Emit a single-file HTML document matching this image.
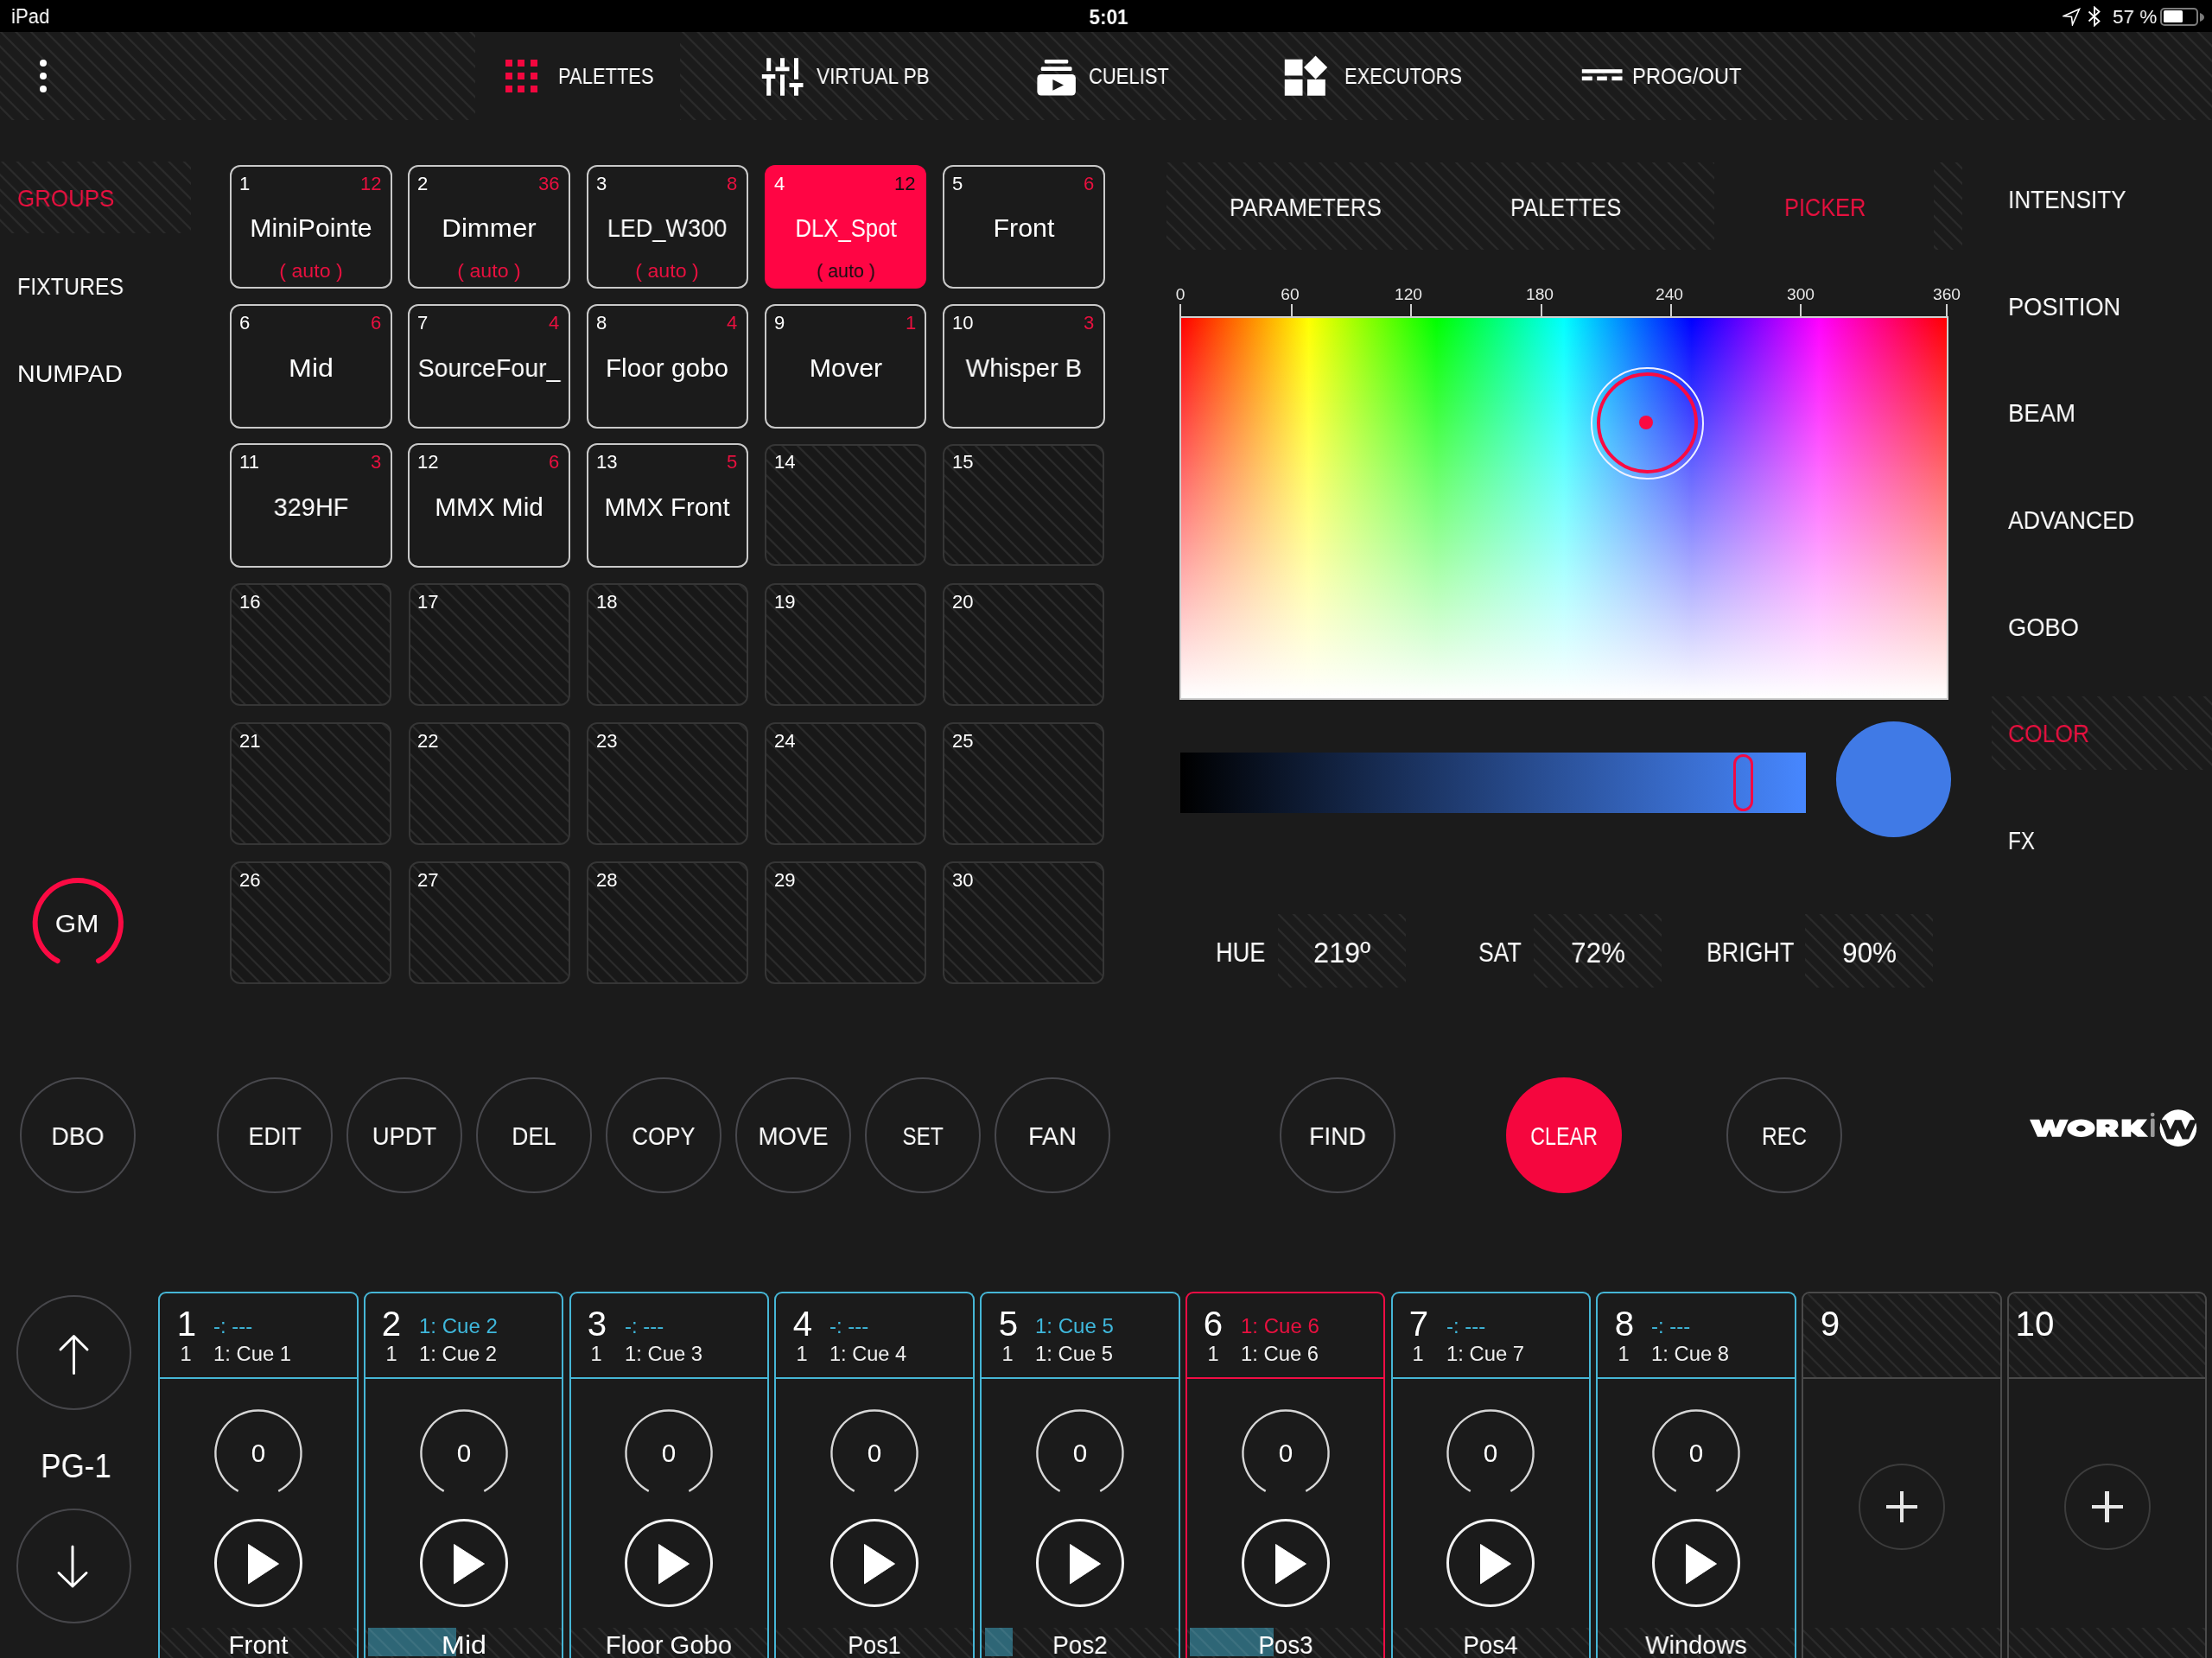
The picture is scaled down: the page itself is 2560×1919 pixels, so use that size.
<!DOCTYPE html>
<html><head><meta charset="utf-8"><title>Executors</title>
<style>
html,body{margin:0;padding:0;}
body{width:2560px;height:1919px;overflow:hidden;position:relative;background:#1b1b1b;font-family:"Liberation Sans",sans-serif;}
.t{position:absolute;line-height:1;white-space:nowrap;will-change:transform;}
</style></head><body>
<div style="position:absolute;left:0.0px;top:0.0px;width:2560.0px;height:37.0px;background:#000;"></div>
<div class="t" id="s_ipad" style="left:12.7px;top:8.2px;font-size:23.69px;color:#fff;transform:scaleX(0.9380);transform-origin:0 0;">iPad</div>
<div class="t" id="s_time" style="left:282.7px;width:2000px;text-align:center;top:8.5px;font-size:23.26px;color:#fff;font-weight:700;transform:scaleX(0.9697);transform-origin:50% 0;">5:01</div>
<div class="t" id="s_batt" style="left:2444.5px;top:7.7px;font-size:22.97px;color:#fff;transform:scaleX(0.9780);transform-origin:0 0;">57 %</div>
<div style="position:absolute;left:2500.0px;top:8.5px;width:44.0px;height:21.0px;border:2px solid #7a7a7a;border-radius:5px;box-sizing:border-box;"></div>
<div style="position:absolute;left:2503.8px;top:11.8px;width:22.4px;height:14.4px;background:#fff;border-radius:1.5px;"></div>
<svg style="position:absolute;left:2546px;top:15px" width="6" height="10"><path d="M0 0 Q5 2 5 5 Q5 8 0 10Z" fill="#7a7a7a"/></svg>
<svg style="position:absolute;left:2415px;top:7px" width="18" height="24" viewBox="0 0 18 24"><path d="M2.5 6.5 L14.5 17.5 L9 22.5 V1.5 L14.5 6.5 L2.5 17.5" fill="none" stroke="#fff" stroke-width="1.8"/></svg>
<svg style="position:absolute;left:2387px;top:9px" width="21" height="21" viewBox="0 0 21 21"><path d="M19.5 1.5 L1.5 9.5 L10.5 10.5 L11.5 19.5 Z" fill="none" stroke="#fff" stroke-width="1.6" stroke-linejoin="miter"/></svg>
<div style="position:absolute;left:0.0px;top:37.0px;width:2560.0px;height:101.5px;background-color:#1b1b1b;background-image:repeating-linear-gradient(45deg,rgba(43,43,43,0) 0px,rgba(43,43,43,0) 9.2px,#2b2b2b 10.2px,#2b2b2b 11.4px,rgba(43,43,43,0) 12.4px);"></div>
<div style="position:absolute;left:550.0px;top:37.0px;width:237.0px;height:101.5px;background:#1b1b1b;"></div>
<div style="position:absolute;left:46.2px;top:69.4px;width:8.0px;height:8.0px;background:#fff;border-radius:50%;"></div>
<div style="position:absolute;left:46.2px;top:83.9px;width:8.0px;height:8.0px;background:#fff;border-radius:50%;"></div>
<div style="position:absolute;left:46.2px;top:98.8px;width:8.0px;height:8.0px;background:#fff;border-radius:50%;"></div>
<div style="position:absolute;left:584.5px;top:68.9px;width:8.0px;height:8.0px;background:#f2073f;"></div>
<div style="position:absolute;left:584.5px;top:83.8px;width:8.0px;height:8.0px;background:#f2073f;"></div>
<div style="position:absolute;left:584.5px;top:98.7px;width:8.0px;height:8.0px;background:#f2073f;"></div>
<div style="position:absolute;left:599.4px;top:68.9px;width:8.0px;height:8.0px;background:#f2073f;"></div>
<div style="position:absolute;left:599.4px;top:83.8px;width:8.0px;height:8.0px;background:#f2073f;"></div>
<div style="position:absolute;left:599.4px;top:98.7px;width:8.0px;height:8.0px;background:#f2073f;"></div>
<div style="position:absolute;left:614.3px;top:68.9px;width:8.0px;height:8.0px;background:#f2073f;"></div>
<div style="position:absolute;left:614.3px;top:83.8px;width:8.0px;height:8.0px;background:#f2073f;"></div>
<div style="position:absolute;left:614.3px;top:98.7px;width:8.0px;height:8.0px;background:#f2073f;"></div>
<div class="t" id="tb_pal" style="left:646.2px;top:76.2px;font-size:25.00px;color:#fff;transform:scaleX(0.8783);transform-origin:0 0;">PALETTES</div>
<svg style="position:absolute;left:880px;top:66px" width="52" height="46" viewBox="880 66 52 46"><g fill="#fff"><rect x="887.2" y="67.2" width="5" height="15"/><rect x="881.8" y="86" width="15.5" height="5"/><rect x="887.2" y="91" width="5" height="19.7"/><rect x="903" y="67.2" width="5" height="10.5"/><rect x="897.5" y="77.5" width="16" height="4.8"/><rect x="903" y="86.4" width="5" height="24.3"/><rect x="919" y="67.2" width="5" height="24.6"/><rect x="913.5" y="96" width="16" height="5"/><rect x="919" y="101" width="5" height="9.7"/></g></svg>
<div class="t" id="tb_vpb" style="left:945.0px;top:76.2px;font-size:25.00px;color:#fff;transform:scaleX(0.9048);transform-origin:0 0;">VIRTUAL PB</div>
<svg style="position:absolute;left:1198px;top:66px" width="50" height="48" viewBox="1198 66 50 48"><rect x="1208.8" y="69.1" width="27.5" height="4.3" rx="1.5" fill="#fff"/><rect x="1204.7" y="77.2" width="35.9" height="4.8" rx="1.5" fill="#fff"/><rect x="1200.4" y="86" width="44.5" height="24.5" rx="4.5" fill="#fff"/><path d="M1218.4 92 L1231 98.4 L1218.4 104.8Z" fill="#1b1b1b"/></svg>
<div class="t" id="tb_cue" style="left:1259.5px;top:76.2px;font-size:25.00px;color:#fff;transform:scaleX(0.8797);transform-origin:0 0;">CUELIST</div>
<svg style="position:absolute;left:1484px;top:62px" width="54" height="52" viewBox="1484 62 54 52"><g fill="#fff"><rect x="1486.8" y="68.7" width="20.7" height="18.8"/><rect x="1486.8" y="91.9" width="20.7" height="18.8"/><rect x="1513" y="91.9" width="20.8" height="18.8"/><path d="M1522.6 64.5 L1536.2 78.1 L1522.6 91.7 L1509 78.1Z"/></g></svg>
<div class="t" id="tb_exe" style="left:1556.0px;top:76.2px;font-size:25.00px;color:#fff;transform:scaleX(0.8766);transform-origin:0 0;">EXECUTORS</div>
<svg style="position:absolute;left:1828px;top:78px" width="52" height="18" viewBox="1828 78 52 18"><g fill="#fff"><rect x="1830.8" y="80.2" width="46.7" height="4.5"/><rect x="1830.8" y="88.5" width="12" height="4.7"/><rect x="1848.2" y="88.5" width="11.6" height="4.7"/><rect x="1865.4" y="88.5" width="12.1" height="4.7"/></g></svg>
<div class="t" id="tb_prog" style="left:1889.4px;top:76.2px;font-size:25.00px;color:#fff;transform:scaleX(0.9487);transform-origin:0 0;">PROG/OUT</div>
<div style="position:absolute;left:0.0px;top:187.0px;width:221.0px;height:83.0px;background-color:#1b1b1b;background-image:repeating-linear-gradient(45deg,rgba(43,43,43,0) 0px,rgba(43,43,43,0) 9.2px,#2b2b2b 10.2px,#2b2b2b 11.4px,rgba(43,43,43,0) 12.4px);"></div>
<div class="t" id="ln_groups" style="left:19.7px;top:215.3px;font-size:28.49px;color:#e8103f;transform:scaleX(0.9096);transform-origin:0 0;">GROUPS</div>
<div class="t" id="ln_fix" style="left:19.7px;top:317.2px;font-size:28.49px;color:#fff;transform:scaleX(0.8743);transform-origin:0 0;">FIXTURES</div>
<div class="t" id="ln_num" style="left:19.7px;top:417.9px;font-size:28.49px;color:#fff;transform:scaleX(1.0039);transform-origin:0 0;">NUMPAD</div>
<svg style="position:absolute;left:0;top:0" width="200" height="1200" viewBox="0 0 200 1200"><path d="M66.63 1112.19 A49.6 49.6 0 1 1 113.97 1112.19" fill="none" stroke="#fb0a43" stroke-width="6" stroke-linecap="round"/></svg>
<div class="t" id="gm" style="left:-910.6px;width:2000px;text-align:center;top:1053.6px;font-size:30.23px;color:#fff;transform:scaleX(1.0403);transform-origin:50% 0;">GM</div>
<div style="position:absolute;left:266.0px;top:190.5px;width:187.7px;height:143.8px;border:2.6px solid #c9c9c9;border-radius:12px;box-sizing:border-box;"></div>
<div class="t" id="g1_n" style="left:277.2px;top:201.7px;font-size:22.09px;color:#fff;transform-origin:0 0;">1</div>
<div class="t" id="g1_c" style="right:2118.8px;text-align:right;top:201.7px;font-size:22.09px;color:#e8103f;transform-origin:100% 0;">12</div>
<div class="t" id="g1_name" style="left:-640.1px;width:2000px;text-align:center;top:249.3px;font-size:29.36px;color:#fff;transform:scaleX(1.0312);transform-origin:50% 0;">MiniPointe</div>
<div class="t" id="g1_auto" style="left:-640.1px;width:2000px;text-align:center;top:302.7px;font-size:22.53px;color:#e8103f;transform:scaleX(1.0292);transform-origin:50% 0;">( auto )</div>
<div style="position:absolute;left:472.2px;top:190.5px;width:187.7px;height:143.8px;border:2.6px solid #c9c9c9;border-radius:12px;box-sizing:border-box;"></div>
<div class="t" id="g2_n" style="left:483.4px;top:201.7px;font-size:22.09px;color:#fff;transform-origin:0 0;">2</div>
<div class="t" id="g2_c" style="right:1912.5px;text-align:right;top:201.7px;font-size:22.09px;color:#e8103f;transform-origin:100% 0;">36</div>
<div class="t" id="g2_name" style="left:-433.9px;width:2000px;text-align:center;top:249.3px;font-size:29.36px;color:#fff;transform:scaleX(1.0641);transform-origin:50% 0;">Dimmer</div>
<div class="t" id="g2_auto" style="left:-433.9px;width:2000px;text-align:center;top:302.7px;font-size:22.53px;color:#e8103f;transform:scaleX(1.0292);transform-origin:50% 0;">( auto )</div>
<div style="position:absolute;left:678.5px;top:190.5px;width:187.7px;height:143.8px;border:2.6px solid #c9c9c9;border-radius:12px;box-sizing:border-box;"></div>
<div class="t" id="g3_n" style="left:689.7px;top:201.7px;font-size:22.09px;color:#fff;transform-origin:0 0;">3</div>
<div class="t" id="g3_c" style="right:1706.3px;text-align:right;top:201.7px;font-size:22.09px;color:#e8103f;transform-origin:100% 0;">8</div>
<div class="t" id="g3_name" style="left:-227.6px;width:2000px;text-align:center;top:249.3px;font-size:29.36px;color:#fff;transform:scaleX(0.9227);transform-origin:50% 0;">LED_W300</div>
<div class="t" id="g3_auto" style="left:-227.6px;width:2000px;text-align:center;top:302.7px;font-size:22.53px;color:#e8103f;transform:scaleX(1.0292);transform-origin:50% 0;">( auto )</div>
<div style="position:absolute;left:884.8px;top:190.5px;width:187.7px;height:143.8px;background:#ff0544;border-radius:12px;"></div>
<div class="t" id="g4_n" style="left:896.0px;top:201.7px;font-size:22.09px;color:#fff;transform-origin:0 0;">4</div>
<div class="t" id="g4_c" style="right:1500.0px;text-align:right;top:201.7px;font-size:22.09px;color:#111;transform-origin:100% 0;">12</div>
<div class="t" id="g4_name" style="left:-21.4px;width:2000px;text-align:center;top:249.3px;font-size:29.36px;color:#fff;transform:scaleX(0.8740);transform-origin:50% 0;">DLX_Spot</div>
<div class="t" id="g4_auto" style="left:-21.4px;width:2000px;text-align:center;top:302.7px;font-size:22.53px;color:#111;transform:scaleX(0.9476);transform-origin:50% 0;">( auto )</div>
<div style="position:absolute;left:1091.0px;top:190.5px;width:187.7px;height:143.8px;border:2.6px solid #c9c9c9;border-radius:12px;box-sizing:border-box;"></div>
<div class="t" id="g5_n" style="left:1102.2px;top:201.7px;font-size:22.09px;color:#fff;transform-origin:0 0;">5</div>
<div class="t" id="g5_c" style="right:1293.8px;text-align:right;top:201.7px;font-size:22.09px;color:#e8103f;transform-origin:100% 0;">6</div>
<div class="t" id="g5_name" style="left:184.8px;width:2000px;text-align:center;top:249.3px;font-size:29.36px;color:#fff;transform:scaleX(1.0358);transform-origin:50% 0;">Front</div>
<div style="position:absolute;left:266.0px;top:351.8px;width:187.7px;height:143.8px;border:2.6px solid #c9c9c9;border-radius:12px;box-sizing:border-box;"></div>
<div class="t" id="g6_n" style="left:277.2px;top:363.0px;font-size:22.09px;color:#fff;transform-origin:0 0;">6</div>
<div class="t" id="g6_c" style="right:2118.8px;text-align:right;top:363.0px;font-size:22.09px;color:#e8103f;transform-origin:100% 0;">6</div>
<div class="t" id="g6_name" style="left:-640.1px;width:2000px;text-align:center;top:410.6px;font-size:29.36px;color:#fff;transform:scaleX(1.0957);transform-origin:50% 0;">Mid</div>
<div style="position:absolute;left:472.2px;top:351.8px;width:187.7px;height:143.8px;border:2.6px solid #c9c9c9;border-radius:12px;box-sizing:border-box;"></div>
<div class="t" id="g7_n" style="left:483.4px;top:363.0px;font-size:22.09px;color:#fff;transform-origin:0 0;">7</div>
<div class="t" id="g7_c" style="right:1912.5px;text-align:right;top:363.0px;font-size:22.09px;color:#e8103f;transform-origin:100% 0;">4</div>
<div class="t" id="g7_name" style="left:-433.9px;width:2000px;text-align:center;top:410.6px;font-size:29.36px;color:#fff;transform:scaleX(0.9719);transform-origin:50% 0;">SourceFour_</div>
<div style="position:absolute;left:678.5px;top:351.8px;width:187.7px;height:143.8px;border:2.6px solid #c9c9c9;border-radius:12px;box-sizing:border-box;"></div>
<div class="t" id="g8_n" style="left:689.7px;top:363.0px;font-size:22.09px;color:#fff;transform-origin:0 0;">8</div>
<div class="t" id="g8_c" style="right:1706.3px;text-align:right;top:363.0px;font-size:22.09px;color:#e8103f;transform-origin:100% 0;">4</div>
<div class="t" id="g8_name" style="left:-227.6px;width:2000px;text-align:center;top:410.6px;font-size:29.36px;color:#fff;transform:scaleX(1.0132);transform-origin:50% 0;">Floor gobo</div>
<div style="position:absolute;left:884.8px;top:351.8px;width:187.7px;height:143.8px;border:2.6px solid #c9c9c9;border-radius:12px;box-sizing:border-box;"></div>
<div class="t" id="g9_n" style="left:896.0px;top:363.0px;font-size:22.09px;color:#fff;transform-origin:0 0;">9</div>
<div class="t" id="g9_c" style="right:1500.0px;text-align:right;top:363.0px;font-size:22.09px;color:#e8103f;transform-origin:100% 0;">1</div>
<div class="t" id="g9_name" style="left:-21.4px;width:2000px;text-align:center;top:410.6px;font-size:29.36px;color:#fff;transform:scaleX(1.0355);transform-origin:50% 0;">Mover</div>
<div style="position:absolute;left:1091.0px;top:351.8px;width:187.7px;height:143.8px;border:2.6px solid #c9c9c9;border-radius:12px;box-sizing:border-box;"></div>
<div class="t" id="g10_n" style="left:1102.2px;top:363.0px;font-size:22.09px;color:#fff;transform-origin:0 0;">10</div>
<div class="t" id="g10_c" style="right:1293.8px;text-align:right;top:363.0px;font-size:22.09px;color:#e8103f;transform-origin:100% 0;">3</div>
<div class="t" id="g10_name" style="left:184.8px;width:2000px;text-align:center;top:410.6px;font-size:29.36px;color:#fff;transform:scaleX(0.9942);transform-origin:50% 0;">Whisper B</div>
<div style="position:absolute;left:266.0px;top:513.1px;width:187.7px;height:143.8px;border:2.6px solid #c9c9c9;border-radius:12px;box-sizing:border-box;"></div>
<div class="t" id="g11_n" style="left:277.2px;top:524.3px;font-size:22.09px;color:#fff;transform-origin:0 0;">11</div>
<div class="t" id="g11_c" style="right:2118.8px;text-align:right;top:524.3px;font-size:22.09px;color:#e8103f;transform-origin:100% 0;">3</div>
<div class="t" id="g11_name" style="left:-640.1px;width:2000px;text-align:center;top:571.9px;font-size:29.36px;color:#fff;transform:scaleX(0.9851);transform-origin:50% 0;">329HF</div>
<div style="position:absolute;left:472.2px;top:513.1px;width:187.7px;height:143.8px;border:2.6px solid #c9c9c9;border-radius:12px;box-sizing:border-box;"></div>
<div class="t" id="g12_n" style="left:483.4px;top:524.3px;font-size:22.09px;color:#fff;transform-origin:0 0;">12</div>
<div class="t" id="g12_c" style="right:1912.5px;text-align:right;top:524.3px;font-size:22.09px;color:#e8103f;transform-origin:100% 0;">6</div>
<div class="t" id="g12_name" style="left:-433.9px;width:2000px;text-align:center;top:571.9px;font-size:29.36px;color:#fff;transform:scaleX(1.0133);transform-origin:50% 0;">MMX Mid</div>
<div style="position:absolute;left:678.5px;top:513.1px;width:187.7px;height:143.8px;border:2.6px solid #c9c9c9;border-radius:12px;box-sizing:border-box;"></div>
<div class="t" id="g13_n" style="left:689.7px;top:524.3px;font-size:22.09px;color:#fff;transform-origin:0 0;">13</div>
<div class="t" id="g13_c" style="right:1706.3px;text-align:right;top:524.3px;font-size:22.09px;color:#e8103f;transform-origin:100% 0;">5</div>
<div class="t" id="g13_name" style="left:-227.6px;width:2000px;text-align:center;top:571.9px;font-size:29.36px;color:#fff;transform-origin:50% 0;">MMX Front</div>
<div style="position:absolute;left:885.0px;top:513.6px;width:187.1px;height:141.8px;border:2px solid #363636;border-radius:12px;box-sizing:border-box;background-color:#181818;background-image:repeating-linear-gradient(45deg,rgba(43,43,43,0) 0px,rgba(43,43,43,0) 9.2px,#2b2b2b 10.2px,#2b2b2b 11.4px,rgba(43,43,43,0) 12.4px);"></div>
<div class="t" id="g14_n" style="left:896.0px;top:524.3px;font-size:22.09px;color:#fff;transform-origin:0 0;">14</div>
<div style="position:absolute;left:1091.3px;top:513.6px;width:187.1px;height:141.8px;border:2px solid #363636;border-radius:12px;box-sizing:border-box;background-color:#181818;background-image:repeating-linear-gradient(45deg,rgba(43,43,43,0) 0px,rgba(43,43,43,0) 9.2px,#2b2b2b 10.2px,#2b2b2b 11.4px,rgba(43,43,43,0) 12.4px);"></div>
<div class="t" id="g15_n" style="left:1102.2px;top:524.3px;font-size:22.09px;color:#fff;transform-origin:0 0;">15</div>
<div style="position:absolute;left:266.3px;top:674.8px;width:187.1px;height:141.8px;border:2px solid #363636;border-radius:12px;box-sizing:border-box;background-color:#181818;background-image:repeating-linear-gradient(45deg,rgba(43,43,43,0) 0px,rgba(43,43,43,0) 9.2px,#2b2b2b 10.2px,#2b2b2b 11.4px,rgba(43,43,43,0) 12.4px);"></div>
<div class="t" id="g16_n" style="left:277.2px;top:685.5px;font-size:22.09px;color:#fff;transform-origin:0 0;">16</div>
<div style="position:absolute;left:472.6px;top:674.8px;width:187.1px;height:141.8px;border:2px solid #363636;border-radius:12px;box-sizing:border-box;background-color:#181818;background-image:repeating-linear-gradient(45deg,rgba(43,43,43,0) 0px,rgba(43,43,43,0) 9.2px,#2b2b2b 10.2px,#2b2b2b 11.4px,rgba(43,43,43,0) 12.4px);"></div>
<div class="t" id="g17_n" style="left:483.4px;top:685.5px;font-size:22.09px;color:#fff;transform-origin:0 0;">17</div>
<div style="position:absolute;left:678.8px;top:674.8px;width:187.1px;height:141.8px;border:2px solid #363636;border-radius:12px;box-sizing:border-box;background-color:#181818;background-image:repeating-linear-gradient(45deg,rgba(43,43,43,0) 0px,rgba(43,43,43,0) 9.2px,#2b2b2b 10.2px,#2b2b2b 11.4px,rgba(43,43,43,0) 12.4px);"></div>
<div class="t" id="g18_n" style="left:689.7px;top:685.5px;font-size:22.09px;color:#fff;transform-origin:0 0;">18</div>
<div style="position:absolute;left:885.0px;top:674.8px;width:187.1px;height:141.8px;border:2px solid #363636;border-radius:12px;box-sizing:border-box;background-color:#181818;background-image:repeating-linear-gradient(45deg,rgba(43,43,43,0) 0px,rgba(43,43,43,0) 9.2px,#2b2b2b 10.2px,#2b2b2b 11.4px,rgba(43,43,43,0) 12.4px);"></div>
<div class="t" id="g19_n" style="left:896.0px;top:685.5px;font-size:22.09px;color:#fff;transform-origin:0 0;">19</div>
<div style="position:absolute;left:1091.3px;top:674.8px;width:187.1px;height:141.8px;border:2px solid #363636;border-radius:12px;box-sizing:border-box;background-color:#181818;background-image:repeating-linear-gradient(45deg,rgba(43,43,43,0) 0px,rgba(43,43,43,0) 9.2px,#2b2b2b 10.2px,#2b2b2b 11.4px,rgba(43,43,43,0) 12.4px);"></div>
<div class="t" id="g20_n" style="left:1102.2px;top:685.5px;font-size:22.09px;color:#fff;transform-origin:0 0;">20</div>
<div style="position:absolute;left:266.3px;top:836.1px;width:187.1px;height:141.8px;border:2px solid #363636;border-radius:12px;box-sizing:border-box;background-color:#181818;background-image:repeating-linear-gradient(45deg,rgba(43,43,43,0) 0px,rgba(43,43,43,0) 9.2px,#2b2b2b 10.2px,#2b2b2b 11.4px,rgba(43,43,43,0) 12.4px);"></div>
<div class="t" id="g21_n" style="left:277.2px;top:846.8px;font-size:22.09px;color:#fff;transform-origin:0 0;">21</div>
<div style="position:absolute;left:472.6px;top:836.1px;width:187.1px;height:141.8px;border:2px solid #363636;border-radius:12px;box-sizing:border-box;background-color:#181818;background-image:repeating-linear-gradient(45deg,rgba(43,43,43,0) 0px,rgba(43,43,43,0) 9.2px,#2b2b2b 10.2px,#2b2b2b 11.4px,rgba(43,43,43,0) 12.4px);"></div>
<div class="t" id="g22_n" style="left:483.4px;top:846.8px;font-size:22.09px;color:#fff;transform-origin:0 0;">22</div>
<div style="position:absolute;left:678.8px;top:836.1px;width:187.1px;height:141.8px;border:2px solid #363636;border-radius:12px;box-sizing:border-box;background-color:#181818;background-image:repeating-linear-gradient(45deg,rgba(43,43,43,0) 0px,rgba(43,43,43,0) 9.2px,#2b2b2b 10.2px,#2b2b2b 11.4px,rgba(43,43,43,0) 12.4px);"></div>
<div class="t" id="g23_n" style="left:689.7px;top:846.8px;font-size:22.09px;color:#fff;transform-origin:0 0;">23</div>
<div style="position:absolute;left:885.0px;top:836.1px;width:187.1px;height:141.8px;border:2px solid #363636;border-radius:12px;box-sizing:border-box;background-color:#181818;background-image:repeating-linear-gradient(45deg,rgba(43,43,43,0) 0px,rgba(43,43,43,0) 9.2px,#2b2b2b 10.2px,#2b2b2b 11.4px,rgba(43,43,43,0) 12.4px);"></div>
<div class="t" id="g24_n" style="left:896.0px;top:846.8px;font-size:22.09px;color:#fff;transform-origin:0 0;">24</div>
<div style="position:absolute;left:1091.3px;top:836.1px;width:187.1px;height:141.8px;border:2px solid #363636;border-radius:12px;box-sizing:border-box;background-color:#181818;background-image:repeating-linear-gradient(45deg,rgba(43,43,43,0) 0px,rgba(43,43,43,0) 9.2px,#2b2b2b 10.2px,#2b2b2b 11.4px,rgba(43,43,43,0) 12.4px);"></div>
<div class="t" id="g25_n" style="left:1102.2px;top:846.8px;font-size:22.09px;color:#fff;transform-origin:0 0;">25</div>
<div style="position:absolute;left:266.3px;top:997.4px;width:187.1px;height:141.8px;border:2px solid #363636;border-radius:12px;box-sizing:border-box;background-color:#181818;background-image:repeating-linear-gradient(45deg,rgba(43,43,43,0) 0px,rgba(43,43,43,0) 9.2px,#2b2b2b 10.2px,#2b2b2b 11.4px,rgba(43,43,43,0) 12.4px);"></div>
<div class="t" id="g26_n" style="left:277.2px;top:1008.1px;font-size:22.09px;color:#fff;transform-origin:0 0;">26</div>
<div style="position:absolute;left:472.6px;top:997.4px;width:187.1px;height:141.8px;border:2px solid #363636;border-radius:12px;box-sizing:border-box;background-color:#181818;background-image:repeating-linear-gradient(45deg,rgba(43,43,43,0) 0px,rgba(43,43,43,0) 9.2px,#2b2b2b 10.2px,#2b2b2b 11.4px,rgba(43,43,43,0) 12.4px);"></div>
<div class="t" id="g27_n" style="left:483.4px;top:1008.1px;font-size:22.09px;color:#fff;transform-origin:0 0;">27</div>
<div style="position:absolute;left:678.8px;top:997.4px;width:187.1px;height:141.8px;border:2px solid #363636;border-radius:12px;box-sizing:border-box;background-color:#181818;background-image:repeating-linear-gradient(45deg,rgba(43,43,43,0) 0px,rgba(43,43,43,0) 9.2px,#2b2b2b 10.2px,#2b2b2b 11.4px,rgba(43,43,43,0) 12.4px);"></div>
<div class="t" id="g28_n" style="left:689.7px;top:1008.1px;font-size:22.09px;color:#fff;transform-origin:0 0;">28</div>
<div style="position:absolute;left:885.0px;top:997.4px;width:187.1px;height:141.8px;border:2px solid #363636;border-radius:12px;box-sizing:border-box;background-color:#181818;background-image:repeating-linear-gradient(45deg,rgba(43,43,43,0) 0px,rgba(43,43,43,0) 9.2px,#2b2b2b 10.2px,#2b2b2b 11.4px,rgba(43,43,43,0) 12.4px);"></div>
<div class="t" id="g29_n" style="left:896.0px;top:1008.1px;font-size:22.09px;color:#fff;transform-origin:0 0;">29</div>
<div style="position:absolute;left:1091.3px;top:997.4px;width:187.1px;height:141.8px;border:2px solid #363636;border-radius:12px;box-sizing:border-box;background-color:#181818;background-image:repeating-linear-gradient(45deg,rgba(43,43,43,0) 0px,rgba(43,43,43,0) 9.2px,#2b2b2b 10.2px,#2b2b2b 11.4px,rgba(43,43,43,0) 12.4px);"></div>
<div class="t" id="g30_n" style="left:1102.2px;top:1008.1px;font-size:22.09px;color:#fff;transform-origin:0 0;">30</div>
<div style="position:absolute;left:1350.0px;top:187.5px;width:921.0px;height:101.5px;background-color:#1b1b1b;background-image:repeating-linear-gradient(45deg,rgba(43,43,43,0) 0px,rgba(43,43,43,0) 9.2px,#2b2b2b 10.2px,#2b2b2b 11.4px,rgba(43,43,43,0) 12.4px);"></div>
<div style="position:absolute;left:1983.5px;top:187.5px;width:254.5px;height:101.5px;background:#1b1b1b;"></div>
<div class="t" id="rt_par" style="left:1423.4px;top:225.3px;font-size:29.51px;color:#fff;transform:scaleX(0.8741);transform-origin:0 0;">PARAMETERS</div>
<div class="t" id="rt_pal" style="left:1747.5px;top:225.3px;font-size:29.51px;color:#fff;transform:scaleX(0.8633);transform-origin:0 0;">PALETTES</div>
<div class="t" id="rt_pick" style="left:2064.6px;top:225.3px;font-size:29.51px;color:#e8103f;transform:scaleX(0.8589);transform-origin:0 0;">PICKER</div>
<div style="position:absolute;left:1365.3px;top:352.0px;width:2.0px;height:16.0px;background:#cfcfcf;"></div>
<div class="t" id="tick0" style="left:365.5px;width:2000px;text-align:center;top:330.6px;font-size:19.19px;color:#e8e8e8;transform-origin:50% 0;">0</div>
<div style="position:absolute;left:1494.0px;top:352.0px;width:2.0px;height:16.0px;background:#cfcfcf;"></div>
<div class="t" id="tick60" style="left:493.0px;width:2000px;text-align:center;top:330.6px;font-size:19.19px;color:#e8e8e8;transform-origin:50% 0;">60</div>
<div style="position:absolute;left:1632.0px;top:352.0px;width:2.0px;height:16.0px;background:#cfcfcf;"></div>
<div class="t" id="tick120" style="left:630.3px;width:2000px;text-align:center;top:330.6px;font-size:19.19px;color:#e8e8e8;transform-origin:50% 0;">120</div>
<div style="position:absolute;left:1783.0px;top:352.0px;width:2.0px;height:16.0px;background:#cfcfcf;"></div>
<div class="t" id="tick180" style="left:782.0px;width:2000px;text-align:center;top:330.6px;font-size:19.19px;color:#e8e8e8;transform-origin:50% 0;">180</div>
<div style="position:absolute;left:1933.0px;top:352.0px;width:2.0px;height:16.0px;background:#cfcfcf;"></div>
<div class="t" id="tick240" style="left:932.0px;width:2000px;text-align:center;top:330.6px;font-size:19.19px;color:#e8e8e8;transform-origin:50% 0;">240</div>
<div style="position:absolute;left:2082.7px;top:352.0px;width:2.0px;height:16.0px;background:#cfcfcf;"></div>
<div class="t" id="tick300" style="left:1083.7px;width:2000px;text-align:center;top:330.6px;font-size:19.19px;color:#e8e8e8;transform-origin:50% 0;">300</div>
<div style="position:absolute;left:2251.9px;top:352.0px;width:2.0px;height:16.0px;background:#cfcfcf;"></div>
<div class="t" id="tick360" style="left:1252.5px;width:2000px;text-align:center;top:330.6px;font-size:19.19px;color:#e8e8e8;transform-origin:50% 0;">360</div>
<div style="position:absolute;left:1365.3px;top:366.1px;width:889.4px;height:444.1px;border:2px solid #cfcfcf;box-sizing:border-box;"></div>
<div style="position:absolute;left:1367.3px;top:368.1px;width:885.4px;height:440.1px;background:linear-gradient(to bottom,rgba(255,255,255,0),#fff),linear-gradient(to right,#f00,#ff0,#0f0,#0ff,#00f,#f0f,#f00);"></div>
<div style="position:absolute;left:1841.2px;top:424.5px;width:130.6px;height:130.6px;border:2px solid #eef0ff;border-radius:50%;box-sizing:border-box;"></div>
<div style="position:absolute;left:1847.6px;top:431.0px;width:117.2px;height:117.2px;border:4px solid #fa0a42;border-radius:50%;box-sizing:border-box;"></div>
<div style="position:absolute;left:1897.2px;top:481.1px;width:16.0px;height:16.0px;background:#fa0a42;border-radius:50%;"></div>
<div style="position:absolute;left:1366.0px;top:871.2px;width:724.0px;height:69.6px;background:linear-gradient(to right,#000,#4787ff);"></div>
<div style="position:absolute;left:2006.0px;top:873.3px;width:22.5px;height:66.0px;border:3.6px solid #f20a44;border-radius:12px;box-sizing:border-box;"></div>
<div style="position:absolute;left:2124.8px;top:835.2px;width:133.6px;height:133.6px;background:#407ae6;border-radius:50%;"></div>
<div style="position:absolute;left:1478.8px;top:1058.0px;width:147.8px;height:84.5px;background-color:#1b1b1b;background-image:repeating-linear-gradient(45deg,rgba(43,43,43,0) 0px,rgba(43,43,43,0) 9.2px,#2b2b2b 10.2px,#2b2b2b 11.4px,rgba(43,43,43,0) 12.4px);"></div>
<div style="position:absolute;left:1775.0px;top:1058.0px;width:147.8px;height:84.5px;background-color:#1b1b1b;background-image:repeating-linear-gradient(45deg,rgba(43,43,43,0) 0px,rgba(43,43,43,0) 9.2px,#2b2b2b 10.2px,#2b2b2b 11.4px,rgba(43,43,43,0) 12.4px);"></div>
<div style="position:absolute;left:2089.4px;top:1058.0px;width:147.8px;height:84.5px;background-color:#1b1b1b;background-image:repeating-linear-gradient(45deg,rgba(43,43,43,0) 0px,rgba(43,43,43,0) 9.2px,#2b2b2b 10.2px,#2b2b2b 11.4px,rgba(43,43,43,0) 12.4px);"></div>
<div class="t" id="hsb_h" style="left:1406.8px;top:1087.2px;font-size:30.52px;color:#fff;transform:scaleX(0.8932);transform-origin:0 0;">HUE</div>
<div class="t" id="hsb_hv" style="left:1520.0px;top:1085.6px;font-size:33.58px;color:#fff;transform:scaleX(0.9677);transform-origin:0 0;">219º</div>
<div class="t" id="hsb_s" style="left:1710.7px;top:1087.2px;font-size:30.52px;color:#fff;transform:scaleX(0.8703);transform-origin:0 0;">SAT</div>
<div class="t" id="hsb_sv" style="left:1817.7px;top:1085.6px;font-size:33.58px;color:#fff;transform:scaleX(0.9385);transform-origin:0 0;">72%</div>
<div class="t" id="hsb_b" style="left:1975.0px;top:1087.2px;font-size:30.52px;color:#fff;transform:scaleX(0.8789);transform-origin:0 0;">BRIGHT</div>
<div class="t" id="hsb_bv" style="left:2132.0px;top:1085.6px;font-size:33.58px;color:#fff;transform:scaleX(0.9385);transform-origin:0 0;">90%</div>
<div style="position:absolute;left:2304.6px;top:806.0px;width:255.4px;height:84.5px;background-color:#1b1b1b;background-image:repeating-linear-gradient(45deg,rgba(43,43,43,0) 0px,rgba(43,43,43,0) 9.2px,#2b2b2b 10.2px,#2b2b2b 11.4px,rgba(43,43,43,0) 12.4px);"></div>
<div class="t" id="rn_INTENSITY" style="left:2324.2px;top:215.9px;font-size:29.80px;color:#fff;transform:scaleX(0.8778);transform-origin:0 0;">INTENSITY</div>
<div class="t" id="rn_POSITION" style="left:2324.2px;top:339.6px;font-size:29.80px;color:#fff;transform:scaleX(0.9147);transform-origin:0 0;">POSITION</div>
<div class="t" id="rn_BEAM" style="left:2324.2px;top:463.3px;font-size:29.80px;color:#fff;transform:scaleX(0.9248);transform-origin:0 0;">BEAM</div>
<div class="t" id="rn_ADVANCED" style="left:2324.2px;top:587.0px;font-size:29.80px;color:#fff;transform:scaleX(0.8947);transform-origin:0 0;">ADVANCED</div>
<div class="t" id="rn_GOBO" style="left:2324.2px;top:710.7px;font-size:29.80px;color:#fff;transform:scaleX(0.9158);transform-origin:0 0;">GOBO</div>
<div class="t" id="rn_COLOR" style="left:2324.2px;top:834.4px;font-size:29.80px;color:#e8103f;transform:scaleX(0.8876);transform-origin:0 0;">COLOR</div>
<div class="t" id="rn_FX" style="left:2324.2px;top:958.1px;font-size:29.80px;color:#fff;transform:scaleX(0.8129);transform-origin:0 0;">FX</div>
<div style="position:absolute;left:22.5px;top:1247.0px;width:134.0px;height:134.0px;border:2.3px solid #48484d;border-radius:50%;box-sizing:border-box;"></div>
<div class="t" id="btn_DBO" style="left:-910.5px;width:2000px;text-align:center;top:1299.8px;font-size:29.80px;color:#fff;transform:scaleX(0.9494);transform-origin:50% 0;">DBO</div>
<div style="position:absolute;left:251.0px;top:1247.0px;width:134.0px;height:134.0px;border:2.3px solid #48484d;border-radius:50%;box-sizing:border-box;"></div>
<div class="t" id="btn_EDIT" style="left:-682.0px;width:2000px;text-align:center;top:1299.8px;font-size:29.80px;color:#fff;transform:scaleX(0.8974);transform-origin:50% 0;">EDIT</div>
<div style="position:absolute;left:400.8px;top:1247.0px;width:134.0px;height:134.0px;border:2.3px solid #48484d;border-radius:50%;box-sizing:border-box;"></div>
<div class="t" id="btn_UPDT" style="left:-532.2px;width:2000px;text-align:center;top:1299.8px;font-size:29.80px;color:#fff;transform:scaleX(0.9182);transform-origin:50% 0;">UPDT</div>
<div style="position:absolute;left:550.7px;top:1247.0px;width:134.0px;height:134.0px;border:2.3px solid #48484d;border-radius:50%;box-sizing:border-box;"></div>
<div class="t" id="btn_DEL" style="left:-382.3px;width:2000px;text-align:center;top:1299.8px;font-size:29.80px;color:#fff;transform:scaleX(0.8846);transform-origin:50% 0;">DEL</div>
<div style="position:absolute;left:700.6px;top:1247.0px;width:134.0px;height:134.0px;border:2.3px solid #48484d;border-radius:50%;box-sizing:border-box;"></div>
<div class="t" id="btn_COPY" style="left:-232.4px;width:2000px;text-align:center;top:1299.8px;font-size:29.80px;color:#fff;transform:scaleX(0.8656);transform-origin:50% 0;">COPY</div>
<div style="position:absolute;left:851.0px;top:1247.0px;width:134.0px;height:134.0px;border:2.3px solid #48484d;border-radius:50%;box-sizing:border-box;"></div>
<div class="t" id="btn_MOVE" style="left:-82.0px;width:2000px;text-align:center;top:1299.8px;font-size:29.80px;color:#fff;transform:scaleX(0.9238);transform-origin:50% 0;">MOVE</div>
<div style="position:absolute;left:1001.0px;top:1247.0px;width:134.0px;height:134.0px;border:2.3px solid #48484d;border-radius:50%;box-sizing:border-box;"></div>
<div class="t" id="btn_SET" style="left:68.0px;width:2000px;text-align:center;top:1299.8px;font-size:29.80px;color:#fff;transform:scaleX(0.8137);transform-origin:50% 0;">SET</div>
<div style="position:absolute;left:1150.8px;top:1247.0px;width:134.0px;height:134.0px;border:2.3px solid #48484d;border-radius:50%;box-sizing:border-box;"></div>
<div class="t" id="btn_FAN" style="left:217.8px;width:2000px;text-align:center;top:1299.8px;font-size:29.80px;color:#fff;transform:scaleX(0.9654);transform-origin:50% 0;">FAN</div>
<div style="position:absolute;left:1480.8px;top:1247.0px;width:134.0px;height:134.0px;border:2.3px solid #48484d;border-radius:50%;box-sizing:border-box;"></div>
<div class="t" id="btn_FIND" style="left:547.8px;width:2000px;text-align:center;top:1299.8px;font-size:29.80px;color:#fff;transform:scaleX(0.9478);transform-origin:50% 0;">FIND</div>
<div style="position:absolute;left:1743.3px;top:1247.0px;width:134.0px;height:134.0px;background:#f5063e;border-radius:50%;"></div>
<div class="t" id="btn_CLEAR" style="left:810.3px;width:2000px;text-align:center;top:1299.8px;font-size:29.80px;color:#fff;transform:scaleX(0.7812);transform-origin:50% 0;">CLEAR</div>
<div style="position:absolute;left:1997.6px;top:1247.0px;width:134.0px;height:134.0px;border:2.3px solid #48484d;border-radius:50%;box-sizing:border-box;"></div>
<div class="t" id="btn_REC" style="left:1064.6px;width:2000px;text-align:center;top:1299.8px;font-size:29.80px;color:#fff;transform:scaleX(0.8242);transform-origin:50% 0;">REC</div>
<svg style="position:absolute;left:2340px;top:1280px" width="215" height="52" viewBox="2340 1280 215 52"><g fill="#fff"><path d="M2349 1295.8 H2360.2 L2363.8 1306.5 L2368.1 1295.8 H2375.7 L2379 1306.5 L2383.6 1295.8 H2393.8 L2385.1 1315.8 H2375 L2371.8 1307.5 L2368.2 1315.8 H2358 Z"/><path fill-rule="evenodd" d="M2392.4 1305.8 A16.1 10.3 0 1 0 2424.6 1305.8 A16.1 10.3 0 1 0 2392.4 1305.8 Z M2402.9 1306.1 A5.4 3.5 0 1 0 2413.7 1306.1 A5.4 3.5 0 1 0 2402.9 1306.1 Z"/><path fill-rule="evenodd" d="M2426.5 1295.6 H2444 Q2451.5 1295.6 2451.5 1302 Q2451.5 1306.8 2447 1308.8 L2452.5 1315.8 H2442 L2437.2 1310 V1315.8 H2426.5 Z M2436.3 1303 A2.7 1.7 0 1 0 2441.7 1303 A2.7 1.7 0 1 0 2436.3 1303 Z"/><path d="M2455.6 1295.6 H2466.3 V1302.5 L2473.5 1295.6 H2485 L2477 1306 L2486.2 1315.8 H2474 L2466.3 1309.5 V1315.8 H2455.6 Z"/><circle cx="2520.9" cy="1305.6" r="21.3"/></g><g fill="#9a9a9a"><circle cx="2491.2" cy="1290.1" r="2.4"/><rect x="2489" y="1294.5" width="4.6" height="21.5" rx="1.5"/></g><path d="M2499.5 1296.3 H2506.9 L2511.6 1307.6 L2517 1296.3 H2524.5 L2529.2 1307.6 L2534.8 1296.3 H2542.5 L2533.2 1318.6 H2525.7 L2520.4 1307.6 L2515.7 1318.6 H2507.8 Z" fill="#1b1b1b"/></svg>
<div style="position:absolute;left:19.0px;top:1498.8px;width:133.0px;height:133.0px;border:2px solid #46464a;border-radius:50%;box-sizing:border-box;"></div>
<div style="position:absolute;left:19.0px;top:1746.3px;width:133.0px;height:133.0px;border:2px solid #46464a;border-radius:50%;box-sizing:border-box;"></div>
<svg style="position:absolute;left:0;top:1500px" width="170" height="400" viewBox="0 1500 170 400"><g fill="none" stroke="#fff" stroke-width="3" stroke-linecap="round" stroke-linejoin="round"><path d="M85.5 1589.5 V1546.5 M70 1562 L85.5 1546.5 L101 1562"/><path d="M84 1790 V1836 M68 1820.5 L84 1836 L100 1820.5"/></g></svg>
<div class="t" id="pg1" style="left:-912.5px;width:2000px;text-align:center;top:1677.6px;font-size:38.08px;color:#fff;transform:scaleX(0.9170);transform-origin:50% 0;">PG-1</div>
<div style="position:absolute;left:185.0px;top:1883.5px;width:227.5px;height:36.0px;background-color:#1b1b1b;background-image:repeating-linear-gradient(45deg,rgba(43,43,43,0) 0px,rgba(43,43,43,0) 9.2px,#2b2b2b 10.2px,#2b2b2b 11.4px,rgba(43,43,43,0) 12.4px);"></div>
<div style="position:absolute;left:183.0px;top:1495.3px;width:231.5px;height:440.0px;border:2.2px solid #46b6d6;border-bottom:none;border-radius:9px 9px 0 0;box-sizing:border-box;"></div>
<div style="position:absolute;left:183.0px;top:1594.3px;width:231.5px;height:2.2px;background:#46b6d6;"></div>
<div class="t" id="ex1_num" style="left:-784.5px;width:2000px;text-align:center;top:1512.8px;font-size:40.26px;color:#fff;transform-origin:50% 0;">1</div>
<div class="t" id="ex1_cue" style="left:247.0px;top:1523.9px;font-size:23.55px;color:#3fb8dc;transform:scaleX(1.0167);transform-origin:0 0;">-: ---</div>
<div class="t" id="ex1_one" style="left:-785.3px;width:2000px;text-align:center;top:1555.5px;font-size:23.55px;color:#eee;transform-origin:50% 0;">1</div>
<div class="t" id="ex1_cue2" style="left:247.0px;top:1555.5px;font-size:23.55px;color:#eee;transform:scaleX(1.0116);transform-origin:0 0;">1: Cue 1</div>
<svg style="position:absolute;left:238.8px;top:1622px" width="120" height="120" viewBox="238.8 1622 120 120"><path d="M275.46 1725.89 A49.6 49.6 0 1 1 322.04 1725.89" fill="none" stroke="#d6d6d6" stroke-width="2.4"/></svg>
<div class="t" id="ex1_zero" style="left:-701.2px;width:2000px;text-align:center;top:1667.4px;font-size:29.65px;color:#fff;transform-origin:50% 0;">0</div>
<div style="position:absolute;left:247.8px;top:1758.0px;width:102.0px;height:102.0px;border:3.6px solid #f2f2f2;border-radius:50%;box-sizing:border-box;"></div>
<svg style="position:absolute;left:284.8px;top:1785px" width="40" height="50" viewBox="0 0 40 50"><path d="M2.5 2.5 L37.5 25 L2.5 48 Z" fill="#fff" stroke="#fff" stroke-width="1" stroke-linejoin="round"/></svg>
<div class="t" id="ex1_label" style="left:-701.2px;width:2000px;text-align:center;top:1888.7px;font-size:29.36px;color:#fff;transform:scaleX(1.0062);transform-origin:50% 0;">Front</div>
<div style="position:absolute;left:422.8px;top:1883.5px;width:227.5px;height:36.0px;background-color:#1b1b1b;background-image:repeating-linear-gradient(45deg,rgba(43,43,43,0) 0px,rgba(43,43,43,0) 9.2px,#2b2b2b 10.2px,#2b2b2b 11.4px,rgba(43,43,43,0) 12.4px);"></div>
<div style="position:absolute;left:426.2px;top:1883.5px;width:102.2px;height:33.5px;background-color:#2e6676;background-image:repeating-linear-gradient(45deg,rgba(255,255,255,0) 0px,rgba(255,255,255,0) 9.2px,rgba(255,255,255,0.07) 10.2px,rgba(255,255,255,0.07) 11.4px,rgba(255,255,255,0) 12.4px);"></div>
<div style="position:absolute;left:420.8px;top:1495.3px;width:231.5px;height:440.0px;border:2.2px solid #46b6d6;border-bottom:none;border-radius:9px 9px 0 0;box-sizing:border-box;"></div>
<div style="position:absolute;left:420.8px;top:1594.3px;width:231.5px;height:2.2px;background:#46b6d6;"></div>
<div class="t" id="ex2_num" style="left:-546.8px;width:2000px;text-align:center;top:1512.8px;font-size:40.26px;color:#fff;transform-origin:50% 0;">2</div>
<div class="t" id="ex2_cue" style="left:484.8px;top:1523.9px;font-size:23.55px;color:#3fb8dc;transform:scaleX(1.0208);transform-origin:0 0;">1: Cue 2</div>
<div class="t" id="ex2_one" style="left:-547.5px;width:2000px;text-align:center;top:1555.5px;font-size:23.55px;color:#eee;transform-origin:50% 0;">1</div>
<div class="t" id="ex2_cue2" style="left:484.8px;top:1555.5px;font-size:23.55px;color:#eee;transform:scaleX(1.0116);transform-origin:0 0;">1: Cue 2</div>
<svg style="position:absolute;left:476.5px;top:1622px" width="120" height="120" viewBox="476.5 1622 120 120"><path d="M513.21 1725.89 A49.6 49.6 0 1 1 559.79 1725.89" fill="none" stroke="#d6d6d6" stroke-width="2.4"/></svg>
<div class="t" id="ex2_zero" style="left:-463.5px;width:2000px;text-align:center;top:1667.4px;font-size:29.65px;color:#fff;transform-origin:50% 0;">0</div>
<div style="position:absolute;left:485.5px;top:1758.0px;width:102.0px;height:102.0px;border:3.6px solid #f2f2f2;border-radius:50%;box-sizing:border-box;"></div>
<svg style="position:absolute;left:522.5px;top:1785px" width="40" height="50" viewBox="0 0 40 50"><path d="M2.5 2.5 L37.5 25 L2.5 48 Z" fill="#fff" stroke="#fff" stroke-width="1" stroke-linejoin="round"/></svg>
<div class="t" id="ex2_label" style="left:-463.5px;width:2000px;text-align:center;top:1888.7px;font-size:29.36px;color:#fff;transform:scaleX(1.0957);transform-origin:50% 0;">Mid</div>
<div style="position:absolute;left:660.5px;top:1883.5px;width:227.5px;height:36.0px;background-color:#1b1b1b;background-image:repeating-linear-gradient(45deg,rgba(43,43,43,0) 0px,rgba(43,43,43,0) 9.2px,#2b2b2b 10.2px,#2b2b2b 11.4px,rgba(43,43,43,0) 12.4px);"></div>
<div style="position:absolute;left:658.5px;top:1495.3px;width:231.5px;height:440.0px;border:2.2px solid #46b6d6;border-bottom:none;border-radius:9px 9px 0 0;box-sizing:border-box;"></div>
<div style="position:absolute;left:658.5px;top:1594.3px;width:231.5px;height:2.2px;background:#46b6d6;"></div>
<div class="t" id="ex3_num" style="left:-309.0px;width:2000px;text-align:center;top:1512.8px;font-size:40.26px;color:#fff;transform-origin:50% 0;">3</div>
<div class="t" id="ex3_cue" style="left:722.5px;top:1523.9px;font-size:23.55px;color:#3fb8dc;transform:scaleX(1.0167);transform-origin:0 0;">-: ---</div>
<div class="t" id="ex3_one" style="left:-309.8px;width:2000px;text-align:center;top:1555.5px;font-size:23.55px;color:#eee;transform-origin:50% 0;">1</div>
<div class="t" id="ex3_cue2" style="left:722.5px;top:1555.5px;font-size:23.55px;color:#eee;transform:scaleX(1.0116);transform-origin:0 0;">1: Cue 3</div>
<svg style="position:absolute;left:714.2px;top:1622px" width="120" height="120" viewBox="714.2 1622 120 120"><path d="M750.96 1725.89 A49.6 49.6 0 1 1 797.54 1725.89" fill="none" stroke="#d6d6d6" stroke-width="2.4"/></svg>
<div class="t" id="ex3_zero" style="left:-225.8px;width:2000px;text-align:center;top:1667.4px;font-size:29.65px;color:#fff;transform-origin:50% 0;">0</div>
<div style="position:absolute;left:723.2px;top:1758.0px;width:102.0px;height:102.0px;border:3.6px solid #f2f2f2;border-radius:50%;box-sizing:border-box;"></div>
<svg style="position:absolute;left:760.2px;top:1785px" width="40" height="50" viewBox="0 0 40 50"><path d="M2.5 2.5 L37.5 25 L2.5 48 Z" fill="#fff" stroke="#fff" stroke-width="1" stroke-linejoin="round"/></svg>
<div class="t" id="ex3_label" style="left:-225.8px;width:2000px;text-align:center;top:1888.7px;font-size:29.36px;color:#fff;transform:scaleX(0.9958);transform-origin:50% 0;">Floor Gobo</div>
<div style="position:absolute;left:898.2px;top:1883.5px;width:227.5px;height:36.0px;background-color:#1b1b1b;background-image:repeating-linear-gradient(45deg,rgba(43,43,43,0) 0px,rgba(43,43,43,0) 9.2px,#2b2b2b 10.2px,#2b2b2b 11.4px,rgba(43,43,43,0) 12.4px);"></div>
<div style="position:absolute;left:896.2px;top:1495.3px;width:231.5px;height:440.0px;border:2.2px solid #46b6d6;border-bottom:none;border-radius:9px 9px 0 0;box-sizing:border-box;"></div>
<div style="position:absolute;left:896.2px;top:1594.3px;width:231.5px;height:2.2px;background:#46b6d6;"></div>
<div class="t" id="ex4_num" style="left:-71.2px;width:2000px;text-align:center;top:1512.8px;font-size:40.26px;color:#fff;transform-origin:50% 0;">4</div>
<div class="t" id="ex4_cue" style="left:960.2px;top:1523.9px;font-size:23.55px;color:#3fb8dc;transform:scaleX(1.0167);transform-origin:0 0;">-: ---</div>
<div class="t" id="ex4_one" style="left:-72.0px;width:2000px;text-align:center;top:1555.5px;font-size:23.55px;color:#eee;transform-origin:50% 0;">1</div>
<div class="t" id="ex4_cue2" style="left:960.2px;top:1555.5px;font-size:23.55px;color:#eee;transform-origin:0 0;">1: Cue 4</div>
<svg style="position:absolute;left:952.0px;top:1622px" width="120" height="120" viewBox="952.0 1622 120 120"><path d="M988.71 1725.89 A49.6 49.6 0 1 1 1035.29 1725.89" fill="none" stroke="#d6d6d6" stroke-width="2.4"/></svg>
<div class="t" id="ex4_zero" style="left:12.0px;width:2000px;text-align:center;top:1667.4px;font-size:29.65px;color:#fff;transform-origin:50% 0;">0</div>
<div style="position:absolute;left:961.0px;top:1758.0px;width:102.0px;height:102.0px;border:3.6px solid #f2f2f2;border-radius:50%;box-sizing:border-box;"></div>
<svg style="position:absolute;left:998.0px;top:1785px" width="40" height="50" viewBox="0 0 40 50"><path d="M2.5 2.5 L37.5 25 L2.5 48 Z" fill="#fff" stroke="#fff" stroke-width="1" stroke-linejoin="round"/></svg>
<div class="t" id="ex4_label" style="left:12.0px;width:2000px;text-align:center;top:1888.7px;font-size:29.36px;color:#fff;transform:scaleX(0.9192);transform-origin:50% 0;">Pos1</div>
<div style="position:absolute;left:1136.0px;top:1883.5px;width:227.5px;height:36.0px;background-color:#1b1b1b;background-image:repeating-linear-gradient(45deg,rgba(43,43,43,0) 0px,rgba(43,43,43,0) 9.2px,#2b2b2b 10.2px,#2b2b2b 11.4px,rgba(43,43,43,0) 12.4px);"></div>
<div style="position:absolute;left:1139.5px;top:1883.5px;width:32.5px;height:33.5px;background-color:#2e6676;background-image:repeating-linear-gradient(45deg,rgba(255,255,255,0) 0px,rgba(255,255,255,0) 9.2px,rgba(255,255,255,0.07) 10.2px,rgba(255,255,255,0.07) 11.4px,rgba(255,255,255,0) 12.4px);"></div>
<div style="position:absolute;left:1134.0px;top:1495.3px;width:231.5px;height:440.0px;border:2.2px solid #46b6d6;border-bottom:none;border-radius:9px 9px 0 0;box-sizing:border-box;"></div>
<div style="position:absolute;left:1134.0px;top:1594.3px;width:231.5px;height:2.2px;background:#46b6d6;"></div>
<div class="t" id="ex5_num" style="left:166.5px;width:2000px;text-align:center;top:1512.8px;font-size:40.26px;color:#fff;transform-origin:50% 0;">5</div>
<div class="t" id="ex5_cue" style="left:1198.0px;top:1523.9px;font-size:23.55px;color:#3fb8dc;transform:scaleX(1.0207);transform-origin:0 0;">1: Cue 5</div>
<div class="t" id="ex5_one" style="left:165.7px;width:2000px;text-align:center;top:1555.5px;font-size:23.55px;color:#eee;transform-origin:50% 0;">1</div>
<div class="t" id="ex5_cue2" style="left:1198.0px;top:1555.5px;font-size:23.55px;color:#eee;transform:scaleX(1.0116);transform-origin:0 0;">1: Cue 5</div>
<svg style="position:absolute;left:1189.8px;top:1622px" width="120" height="120" viewBox="1189.8 1622 120 120"><path d="M1226.46 1725.89 A49.6 49.6 0 1 1 1273.04 1725.89" fill="none" stroke="#d6d6d6" stroke-width="2.4"/></svg>
<div class="t" id="ex5_zero" style="left:249.8px;width:2000px;text-align:center;top:1667.4px;font-size:29.65px;color:#fff;transform-origin:50% 0;">0</div>
<div style="position:absolute;left:1198.8px;top:1758.0px;width:102.0px;height:102.0px;border:3.6px solid #f2f2f2;border-radius:50%;box-sizing:border-box;"></div>
<svg style="position:absolute;left:1235.8px;top:1785px" width="40" height="50" viewBox="0 0 40 50"><path d="M2.5 2.5 L37.5 25 L2.5 48 Z" fill="#fff" stroke="#fff" stroke-width="1" stroke-linejoin="round"/></svg>
<div class="t" id="ex5_label" style="left:249.8px;width:2000px;text-align:center;top:1888.7px;font-size:29.36px;color:#fff;transform:scaleX(0.9504);transform-origin:50% 0;">Pos2</div>
<div style="position:absolute;left:1373.8px;top:1883.5px;width:227.5px;height:36.0px;background-color:#1b1b1b;background-image:repeating-linear-gradient(45deg,rgba(43,43,43,0) 0px,rgba(43,43,43,0) 9.2px,#2b2b2b 10.2px,#2b2b2b 11.4px,rgba(43,43,43,0) 12.4px);"></div>
<div style="position:absolute;left:1377.2px;top:1883.5px;width:97.0px;height:33.5px;background-color:#2e6676;background-image:repeating-linear-gradient(45deg,rgba(255,255,255,0) 0px,rgba(255,255,255,0) 9.2px,rgba(255,255,255,0.07) 10.2px,rgba(255,255,255,0.07) 11.4px,rgba(255,255,255,0) 12.4px);"></div>
<div style="position:absolute;left:1371.8px;top:1495.3px;width:231.5px;height:440.0px;border:2.2px solid #f20d45;border-bottom:none;border-radius:9px 9px 0 0;box-sizing:border-box;"></div>
<div style="position:absolute;left:1371.8px;top:1594.3px;width:231.5px;height:2.2px;background:#f20d45;"></div>
<div class="t" id="ex6_num" style="left:404.2px;width:2000px;text-align:center;top:1512.8px;font-size:40.26px;color:#fff;transform-origin:50% 0;">6</div>
<div class="t" id="ex6_cue" style="left:1435.8px;top:1523.9px;font-size:23.55px;color:#e8103f;transform:scaleX(1.0210);transform-origin:0 0;">1: Cue 6</div>
<div class="t" id="ex6_one" style="left:403.5px;width:2000px;text-align:center;top:1555.5px;font-size:23.55px;color:#eee;transform-origin:50% 0;">1</div>
<div class="t" id="ex6_cue2" style="left:1435.8px;top:1555.5px;font-size:23.55px;color:#eee;transform:scaleX(1.0116);transform-origin:0 0;">1: Cue 6</div>
<svg style="position:absolute;left:1427.5px;top:1622px" width="120" height="120" viewBox="1427.5 1622 120 120"><path d="M1464.21 1725.89 A49.6 49.6 0 1 1 1510.79 1725.89" fill="none" stroke="#d6d6d6" stroke-width="2.4"/></svg>
<div class="t" id="ex6_zero" style="left:487.5px;width:2000px;text-align:center;top:1667.4px;font-size:29.65px;color:#fff;transform-origin:50% 0;">0</div>
<div style="position:absolute;left:1436.5px;top:1758.0px;width:102.0px;height:102.0px;border:3.6px solid #f2f2f2;border-radius:50%;box-sizing:border-box;"></div>
<svg style="position:absolute;left:1473.5px;top:1785px" width="40" height="50" viewBox="0 0 40 50"><path d="M2.5 2.5 L37.5 25 L2.5 48 Z" fill="#fff" stroke="#fff" stroke-width="1" stroke-linejoin="round"/></svg>
<div class="t" id="ex6_label" style="left:487.5px;width:2000px;text-align:center;top:1888.7px;font-size:29.36px;color:#fff;transform:scaleX(0.9444);transform-origin:50% 0;">Pos3</div>
<div style="position:absolute;left:1611.5px;top:1883.5px;width:227.5px;height:36.0px;background-color:#1b1b1b;background-image:repeating-linear-gradient(45deg,rgba(43,43,43,0) 0px,rgba(43,43,43,0) 9.2px,#2b2b2b 10.2px,#2b2b2b 11.4px,rgba(43,43,43,0) 12.4px);"></div>
<div style="position:absolute;left:1609.5px;top:1495.3px;width:231.5px;height:440.0px;border:2.2px solid #46b6d6;border-bottom:none;border-radius:9px 9px 0 0;box-sizing:border-box;"></div>
<div style="position:absolute;left:1609.5px;top:1594.3px;width:231.5px;height:2.2px;background:#46b6d6;"></div>
<div class="t" id="ex7_num" style="left:642.0px;width:2000px;text-align:center;top:1512.8px;font-size:40.26px;color:#fff;transform-origin:50% 0;">7</div>
<div class="t" id="ex7_cue" style="left:1673.5px;top:1523.9px;font-size:23.55px;color:#3fb8dc;transform:scaleX(1.0167);transform-origin:0 0;">-: ---</div>
<div class="t" id="ex7_one" style="left:641.2px;width:2000px;text-align:center;top:1555.5px;font-size:23.55px;color:#eee;transform-origin:50% 0;">1</div>
<div class="t" id="ex7_cue2" style="left:1673.5px;top:1555.5px;font-size:23.55px;color:#eee;transform:scaleX(1.0116);transform-origin:0 0;">1: Cue 7</div>
<svg style="position:absolute;left:1665.2px;top:1622px" width="120" height="120" viewBox="1665.2 1622 120 120"><path d="M1701.96 1725.89 A49.6 49.6 0 1 1 1748.54 1725.89" fill="none" stroke="#d6d6d6" stroke-width="2.4"/></svg>
<div class="t" id="ex7_zero" style="left:725.2px;width:2000px;text-align:center;top:1667.4px;font-size:29.65px;color:#fff;transform-origin:50% 0;">0</div>
<div style="position:absolute;left:1674.2px;top:1758.0px;width:102.0px;height:102.0px;border:3.6px solid #f2f2f2;border-radius:50%;box-sizing:border-box;"></div>
<svg style="position:absolute;left:1711.2px;top:1785px" width="40" height="50" viewBox="0 0 40 50"><path d="M2.5 2.5 L37.5 25 L2.5 48 Z" fill="#fff" stroke="#fff" stroke-width="1" stroke-linejoin="round"/></svg>
<div class="t" id="ex7_label" style="left:725.2px;width:2000px;text-align:center;top:1888.7px;font-size:29.36px;color:#fff;transform:scaleX(0.9444);transform-origin:50% 0;">Pos4</div>
<div style="position:absolute;left:1849.2px;top:1883.5px;width:227.5px;height:36.0px;background-color:#1b1b1b;background-image:repeating-linear-gradient(45deg,rgba(43,43,43,0) 0px,rgba(43,43,43,0) 9.2px,#2b2b2b 10.2px,#2b2b2b 11.4px,rgba(43,43,43,0) 12.4px);"></div>
<div style="position:absolute;left:1847.2px;top:1495.3px;width:231.5px;height:440.0px;border:2.2px solid #46b6d6;border-bottom:none;border-radius:9px 9px 0 0;box-sizing:border-box;"></div>
<div style="position:absolute;left:1847.2px;top:1594.3px;width:231.5px;height:2.2px;background:#46b6d6;"></div>
<div class="t" id="ex8_num" style="left:879.8px;width:2000px;text-align:center;top:1512.8px;font-size:40.26px;color:#fff;transform-origin:50% 0;">8</div>
<div class="t" id="ex8_cue" style="left:1911.2px;top:1523.9px;font-size:23.55px;color:#3fb8dc;transform:scaleX(1.0167);transform-origin:0 0;">-: ---</div>
<div class="t" id="ex8_one" style="left:879.0px;width:2000px;text-align:center;top:1555.5px;font-size:23.55px;color:#eee;transform-origin:50% 0;">1</div>
<div class="t" id="ex8_cue2" style="left:1911.2px;top:1555.5px;font-size:23.55px;color:#eee;transform:scaleX(1.0116);transform-origin:0 0;">1: Cue 8</div>
<svg style="position:absolute;left:1903.0px;top:1622px" width="120" height="120" viewBox="1903.0 1622 120 120"><path d="M1939.71 1725.89 A49.6 49.6 0 1 1 1986.29 1725.89" fill="none" stroke="#d6d6d6" stroke-width="2.4"/></svg>
<div class="t" id="ex8_zero" style="left:963.0px;width:2000px;text-align:center;top:1667.4px;font-size:29.65px;color:#fff;transform-origin:50% 0;">0</div>
<div style="position:absolute;left:1912.0px;top:1758.0px;width:102.0px;height:102.0px;border:3.6px solid #f2f2f2;border-radius:50%;box-sizing:border-box;"></div>
<svg style="position:absolute;left:1949.0px;top:1785px" width="40" height="50" viewBox="0 0 40 50"><path d="M2.5 2.5 L37.5 25 L2.5 48 Z" fill="#fff" stroke="#fff" stroke-width="1" stroke-linejoin="round"/></svg>
<div class="t" id="ex8_label" style="left:963.0px;width:2000px;text-align:center;top:1888.7px;font-size:29.36px;color:#fff;transform:scaleX(0.9900);transform-origin:50% 0;">Windows</div>
<div style="position:absolute;left:2087.0px;top:1497.5px;width:227.5px;height:97.0px;background-color:#1b1b1b;background-image:repeating-linear-gradient(45deg,rgba(43,43,43,0) 0px,rgba(43,43,43,0) 9.2px,#2b2b2b 10.2px,#2b2b2b 11.4px,rgba(43,43,43,0) 12.4px);"></div>
<div style="position:absolute;left:2087.0px;top:1883.5px;width:227.5px;height:36.0px;background-color:#1b1b1b;background-image:repeating-linear-gradient(45deg,rgba(43,43,43,0) 0px,rgba(43,43,43,0) 9.2px,#2b2b2b 10.2px,#2b2b2b 11.4px,rgba(43,43,43,0) 12.4px);"></div>
<div style="position:absolute;left:2085.0px;top:1495.3px;width:231.5px;height:440.0px;border:2.2px solid #4a4a4a;border-bottom:none;border-radius:9px 9px 0 0;box-sizing:border-box;"></div>
<div style="position:absolute;left:2085.0px;top:1594.3px;width:231.5px;height:2.2px;background:#4a4a4a;"></div>
<div class="t" id="ex9_num" style="left:1117.5px;width:2000px;text-align:center;top:1512.8px;font-size:40.26px;color:#fff;transform-origin:50% 0;">9</div>
<div style="position:absolute;left:2150.8px;top:1694.0px;width:100.0px;height:100.0px;border:2px solid #3c3c3c;border-radius:50%;box-sizing:border-box;"></div>
<div style="position:absolute;left:2182.8px;top:1741.8px;width:36.0px;height:4.4px;background:#e6e6e6;"></div>
<div style="position:absolute;left:2198.6px;top:1726.0px;width:4.4px;height:36.0px;background:#e6e6e6;"></div>
<div style="position:absolute;left:2324.8px;top:1497.5px;width:227.5px;height:97.0px;background-color:#1b1b1b;background-image:repeating-linear-gradient(45deg,rgba(43,43,43,0) 0px,rgba(43,43,43,0) 9.2px,#2b2b2b 10.2px,#2b2b2b 11.4px,rgba(43,43,43,0) 12.4px);"></div>
<div style="position:absolute;left:2324.8px;top:1883.5px;width:227.5px;height:36.0px;background-color:#1b1b1b;background-image:repeating-linear-gradient(45deg,rgba(43,43,43,0) 0px,rgba(43,43,43,0) 9.2px,#2b2b2b 10.2px,#2b2b2b 11.4px,rgba(43,43,43,0) 12.4px);"></div>
<div style="position:absolute;left:2322.8px;top:1495.3px;width:231.5px;height:440.0px;border:2.2px solid #4a4a4a;border-bottom:none;border-radius:9px 9px 0 0;box-sizing:border-box;"></div>
<div style="position:absolute;left:2322.8px;top:1594.3px;width:231.5px;height:2.2px;background:#4a4a4a;"></div>
<div class="t" id="ex10_num" style="left:1355.2px;width:2000px;text-align:center;top:1512.8px;font-size:40.26px;color:#fff;transform-origin:50% 0;">10</div>
<div style="position:absolute;left:2388.5px;top:1694.0px;width:100.0px;height:100.0px;border:2px solid #3c3c3c;border-radius:50%;box-sizing:border-box;"></div>
<div style="position:absolute;left:2420.5px;top:1741.8px;width:36.0px;height:4.4px;background:#e6e6e6;"></div>
<div style="position:absolute;left:2436.3px;top:1726.0px;width:4.4px;height:36.0px;background:#e6e6e6;"></div>
</body></html>
